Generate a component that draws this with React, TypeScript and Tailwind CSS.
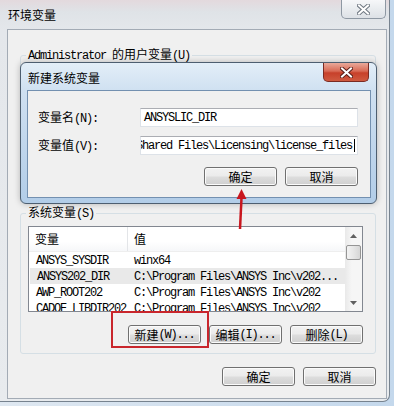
import type { ReactNode } from "react";

const cjkRe = /[\u3000-\u9fff\uff00-\uffef]/;

// SimSun-like mix: CJK glyphs 12px wide, ASCII 6px wide
const T = ({ s }: { s: string }) => {
  const parts = s.match(/[\u3000-\u9fff\uff00-\uffef]+|[^\u3000-\u9fff\uff00-\uffef]+/g) ?? [];
  return (
    <>
      {parts.map((p, i) =>
        cjkRe.test(p) ? (
          <span key={i} className="font-['Noto_Sans_CJK_SC',sans-serif] text-[12px] leading-[14px]">
            {p}
          </span>
        ) : (
          <span
            key={i}
            className="whitespace-pre font-['Liberation_Mono',monospace] text-[12px] leading-[14px] tracking-[-1.2px]"
          >
            {p}
          </span>
        )
      )}
    </>
  );
};

const Btn = ({ children }: { children: ReactNode }) => (
  <div className="flex h-[19px] w-[73px] shrink-0 items-center justify-center rounded-[3px] border border-[#707070] bg-[linear-gradient(180deg,#f2f2f2_0%,#ebebeb_48%,#dddddd_52%,#cfcfcf_100%)] text-black shadow-[inset_0_0_0_1px_#fbfbfb]">
    {children}
  </div>
);

const CloseGlyph = ({ dark }: { dark: string }) => (
  <svg width="13" height="11" viewBox="0 0 13 11">
    <path d="M2 1.5 L11 9.5 M11 1.5 L2 9.5" stroke={dark} strokeWidth="4" strokeLinecap="square" />
    <path d="M2 1.5 L11 9.5 M11 1.5 L2 9.5" stroke="#ffffff" strokeWidth="2" strokeLinecap="square" />
  </svg>
);

const Arrow = ({ up }: { up: boolean }) => (
  <svg width="7" height="4" viewBox="0 0 7 4">
    <path d={up ? "M0 4 L3.5 0 L7 4 Z" : "M0 0 L7 0 L3.5 4 Z"} fill="#606060" />
  </svg>
);

const rows = [
  { n: "ANSYS_SYSDIR", v: "winx64" },
  { n: "ANSYS202_DIR", v: "C:\\Program Files\\ANSYS Inc\\v202...", sel: true },
  { n: "AWP_ROOT202", v: "C:\\Program Files\\ANSYS Inc\\v202" },
  { n: "CADOE_LIBDIR202", v: "C:\\Program Files\\ANSYS Inc\\v202" },
];

export default function App() {
  return (
    <div className="relative h-[406px] w-[394px] overflow-hidden bg-[linear-gradient(90deg,#dfe8f1_0%,#c4d8ec_100%)] text-[12px] leading-[14px] text-black">
      {/* 环境变量 window */}
      <div className="flex h-[402px] w-[390px] flex-col rounded-br-[7px] border-r border-b border-[#77838f] bg-[linear-gradient(180deg,#e3d9dd_0px,#dfe3e7_12px,#e4e7eb_30px,#e8ebee_100%)]">
        <div className="flex h-[29px] shrink-0 items-start justify-between">
          <div className="pl-[8px] pt-[8px]">
            <T s="环境变量" />
          </div>
          <div className="mr-[3px] flex h-[19px] w-[45px] items-center justify-center rounded-b-[5px] border border-t-0 border-[#8e98a3] bg-[linear-gradient(180deg,#f6f7f9_0%,#e9ecef_50%,#dde1e6_100%)]">
            <CloseGlyph dark="#6f7882" />
          </div>
        </div>

        <div className="ml-[7px] flex h-[370px] w-[380px] flex-col border border-[#a3abb5] bg-[#f0f0f0]">
          <fieldset className="ml-[12px] mt-[17px] h-[156px] w-[356px] shrink-0 rounded-[3px] border border-[#d5dfe5]">
            <legend className="ml-[5px] px-[2px]">
              <T s="Administrator 的用户变量(U)" />
            </legend>
          </fieldset>

          <fieldset className="ml-[12px] mt-[2px] flex h-[149px] w-[356px] shrink-0 flex-col rounded-[3px] border border-[#d5dfe5]">
            <legend className="ml-[5px] px-[2px]">
              <T s="系统变量(S)" />
            </legend>
            <div className="ml-[7px] mt-[5px] flex h-[86px] w-[335px] overflow-hidden border border-[#828790] bg-white">
              <div className="flex flex-1 flex-col">
                <div className="flex h-[25px] shrink-0 items-center border-b border-[#eeeeee] bg-[linear-gradient(180deg,#ffffff_0%,#ffffff_60%,#f6f7f9_100%)]">
                  <div className="flex h-full w-[99px] items-center border-r border-[#e3e5e8] pl-[6px]">
                    <T s="变量" />
                  </div>
                  <div className="pl-[6px]">
                    <T s="值" />
                  </div>
                </div>
                {rows.map((r) => (
                  <div
                    key={r.n}
                    className={`flex h-[16px] shrink-0 items-center ${r.sel ? "ml-[1px] bg-[#e9e9e9]" : ""}`}
                  >
                    <div className={`${r.sel ? "w-[98px]" : "w-[99px]"} pl-[7px]`}>
                      <T s={r.n} />
                    </div>
                    <div className="pl-[6px]">
                      <T s={r.v} />
                    </div>
                  </div>
                ))}
              </div>
              <div className="flex w-[17px] shrink-0 flex-col bg-[linear-gradient(90deg,#e9e9e9_0%,#f6f6f6_40%,#f6f6f6_100%)]">
                <div className="flex h-[18px] items-center justify-center">
                  <Arrow up />
                </div>
                <div className="mx-[1px] h-[15px] rounded-[2px] border border-[#959595] bg-[linear-gradient(90deg,#f3f3f3_0%,#e6e6e6_50%,#d6d6d6_100%)]" />
                <div className="flex-1" />
                <div className="flex h-[16px] items-center justify-center">
                  <Arrow up={false} />
                </div>
              </div>
            </div>
            <div className="mr-[12px] mt-[13px] flex justify-end gap-[8px]">
              <Btn>
                <T s="新建(W)..." />
              </Btn>
              <Btn>
                <T s="编辑(I)..." />
              </Btn>
              <Btn>
                <T s="删除(L)" />
              </Btn>
            </div>
          </fieldset>

          <div className="mr-[10px] mt-[13px] flex justify-end gap-[8px]">
            <Btn>
              <T s="确定" />
            </Btn>
            <Btn>
              <T s="取消" />
            </Btn>
          </div>
        </div>
      </div>

      {/* 新建系统变量 dialog */}
      <div className="absolute left-[20px] top-[62px] flex h-[142px] w-[357px] flex-col rounded-[6px] border border-[#4d5e70] bg-[linear-gradient(180deg,#e3eef8_0%,#cfe0f1_20%,#c0d6ec_60%,#b2cde8_100%)] shadow-[0_0_6px_rgba(0,0,0,0.25)]">
        <div className="flex h-[27px] shrink-0 items-start justify-between">
          <div className="pl-[7px] pt-[8px]">
            <T s="新建系统变量" />
          </div>
          <div className="mr-[7px] flex h-[19px] w-[46px] items-center justify-center rounded-b-[5px] border border-t-0 border-[#7a2a22] bg-[linear-gradient(180deg,#e9a99a_0%,#d86a55_45%,#c7402a_55%,#cf5a40_100%)]">
            <CloseGlyph dark="#5b1f18" />
          </div>
        </div>
        <div className="ml-[6px] flex h-[108px] w-[344px] flex-col border border-[#7390b0] bg-[#f0f0f0]">
          <div className="mt-[17px] flex h-[19px] items-center">
            <div className="w-[112px] pl-[10px]">
              <T s="变量名(N):" />
            </div>
            <div className="flex h-[19px] w-[218px] items-center border border-[#dde2e8] border-t-[#abadb3] bg-white pl-[3px]">
              <T s="ANSYSLIC_DIR" />
            </div>
          </div>
          <div className="mt-[9px] flex h-[19px] items-center">
            <div className="w-[112px] pl-[10px]">
              <T s="变量值(V):" />
            </div>
            <div className="flex h-[19px] w-[218px] items-center justify-end overflow-hidden whitespace-nowrap border border-[#dde2e8] border-t-[#abadb3] bg-white pr-[2px]">
              <span className="shrink-0">
                <T s="C:\Program Files\ANSYS Inc\Shared Files\Licensing\license_files" />
              </span>
              <span className="ml-[2px] h-[13px] w-[1px] shrink-0 bg-black" />
            </div>
          </div>
          <div className="mr-[12px] mt-[12px] flex justify-end gap-[8px]">
            <Btn>
              <T s="确定" />
            </Btn>
            <Btn>
              <T s="取消" />
            </Btn>
          </div>
        </div>
      </div>

      {/* annotations */}
      <svg className="absolute left-[231px] top-[188px]" width="20" height="44" viewBox="0 0 20 44">
        <path d="M10.5 1 L5.5 11 L15.5 11 Z" fill="#c8161e" />
        <path d="M10.5 10 L9 41" stroke="#c8161e" strokeWidth="2.5" />
      </svg>
      <div className="absolute left-[111px] top-[311px] h-[37px] w-[98px] border-2 border-[#c9262c]" />
    </div>
  );
}
